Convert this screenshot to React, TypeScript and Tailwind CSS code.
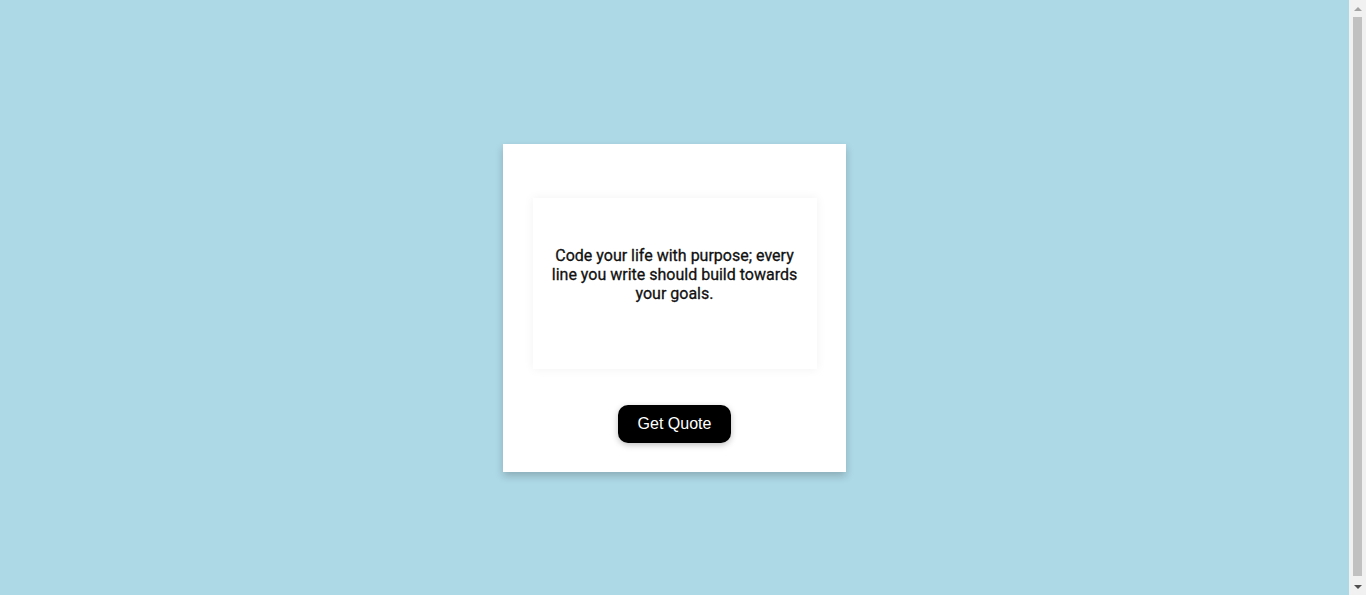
export default function App() {
  return (
    <div className="h-screen w-full flex bg-[#add8e6] overflow-hidden">
      <div className="flex-1 flex items-center justify-center pt-[21px]">
        <div className="w-[343px] bg-white px-[30px] pt-[54px] pb-[29px] flex flex-col items-center shadow-[0_4px_8px_rgba(0,0,0,0.2)]">
          <div className="w-[284px] h-[171px] bg-white shadow-[0_0_10px_rgba(0,0,0,0.06)] px-[17px] pt-[48px]">
            <p
              className="text-center text-[16px] leading-[19px] font-normal text-[#111111]"
              style={{ fontFamily: "Roboto, 'Noto Sans', sans-serif", WebkitTextStroke: "0.3px #111111" }}
            >
              Code your life with purpose; every line you write should build towards your goals.
            </p>
          </div>
          <button
            className="mt-[36px] h-[38px] px-[20px] bg-black text-white text-[16px] rounded-[10px] shadow-[0_2px_6px_rgba(0,0,0,0.25)]"
            style={{ fontFamily: "'Liberation Sans', Arial, sans-serif" }}
          >
            Get Quote
          </button>
        </div>
      </div>
      <div className="w-[17px] h-full bg-[#f1f1f1] flex flex-col items-center">
        <div className="h-[17px] flex items-center justify-center">
          <div className="w-0 h-0 border-l-[4px] border-r-[4px] border-b-[4px] border-l-transparent border-r-transparent border-b-[#a3a3a3]" />
        </div>
        <div className="flex-1 w-[9px] bg-[#c1c1c1] mb-[2px]" />
        <div className="h-[17px] flex items-center justify-center">
          <div className="w-0 h-0 border-l-[4px] border-r-[4px] border-t-[4px] border-l-transparent border-r-transparent border-t-[#505050]" />
        </div>
      </div>
    </div>
  );
}
